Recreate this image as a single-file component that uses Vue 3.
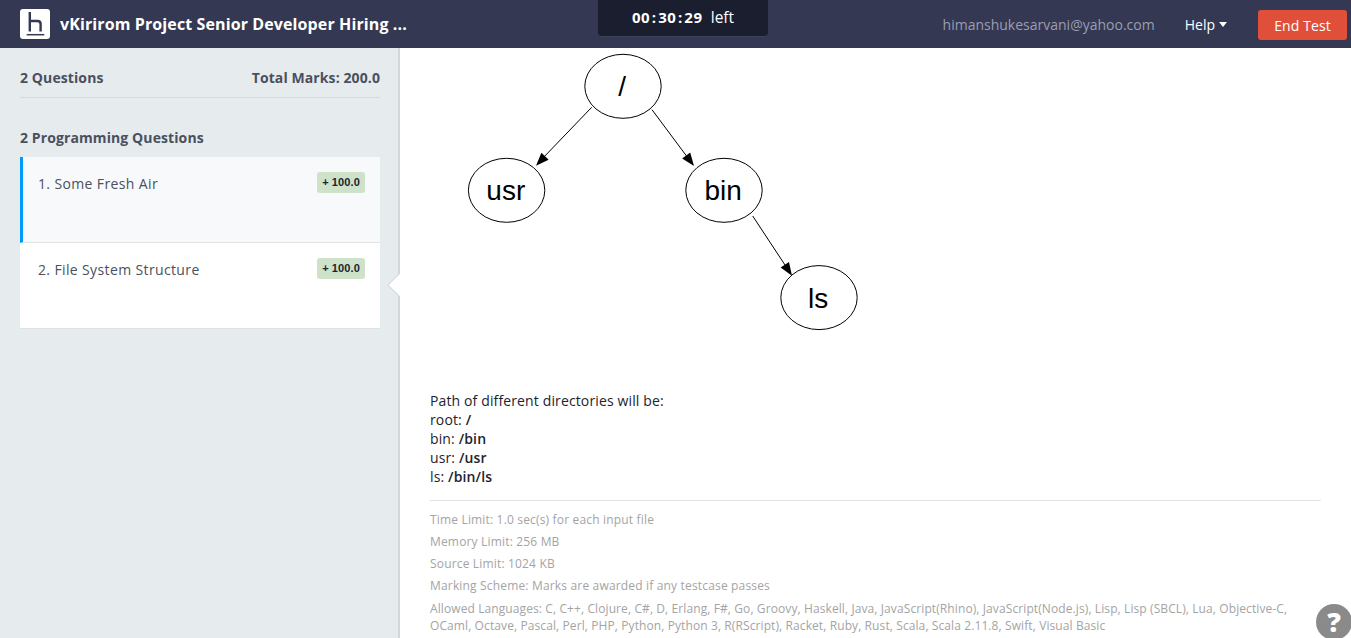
<script setup>
const questions = [
  { id: 1, title: "1. Some Fresh Air", marks: "+ 100.0", active: true },
  { id: 2, title: "2. File System Structure", marks: "+ 100.0", active: false },
];

const nodes = [
  { label: "/", x: 173, y: 38.3 },
  { label: "usr", x: 56.6, y: 142.3 },
  { label: "bin", x: 274, y: 142.3 },
  { label: "ls", x: 369, y: 249.6 },
];

const edges = [
  { x1: 141.7, y1: 59.3, x2: 92, y2: 111, head: "86,117.7 98.6,111.7 91.4,104.8" },
  { x1: 202, y1: 61.7, x2: 238, y2: 110, head: "244,118 240.2,104.6 232.2,110.6" },
  { x1: 302.7, y1: 168, x2: 337, y2: 220, head: "342,227.7 339,214 330.6,219.5" },
];

const paths = [
  { name: "bin", value: "/bin" },
  { name: "usr", value: "/usr" },
  { name: "ls", value: "/bin/ls" },
];

const limits = [
  "Time Limit: 1.0 sec(s) for each input file",
  "Memory Limit: 256 MB",
  "Source Limit: 1024 KB",
  "Marking Scheme: Marks are awarded if any testcase passes",
];
</script>

<template>
  <div class="page">
    <header class="topbar">
      <div class="brand">
        <div class="logo">
          <svg width="30" height="30" viewBox="0 0 30 30">
            <path d="M9.8 3V22.5M9.8 12H17.5Q20.6 12 20.6 15V22.5" fill="none" stroke="#343852" stroke-width="2.4" />
            <path d="M6.7 25.7H24.3" stroke="#343852" stroke-width="1.5" />
          </svg>
        </div>
        <span class="test-name">vKirirom Project Senior Developer Hiring ...</span>
      </div>
      <div class="timer"><b>00 : 30 : 29</b><span>left</span></div>
      <div class="top-right">
        <span class="email">himanshukesarvani@yahoo.com</span>
        <span class="help">Help<i class="caret"></i></span>
        <button class="end-btn">End Test</button>
      </div>
    </header>

    <div class="main">
      <aside class="sidebar">
        <div class="summary">
          <span>2 Questions</span>
          <span>Total Marks: 200.0</span>
        </div>
        <h4 class="section-title">2 Programming Questions</h4>
        <div
          v-for="q in questions"
          :key="q.id"
          class="question"
          :class="{ active: q.active }"
        >
          <span class="q-title">{{ q.title }}</span>
          <span class="badge">{{ q.marks }}</span>
        </div>
        <div class="notch"></div>
      </aside>

      <section class="content">
        <svg class="tree" width="500" height="340" viewBox="0 0 500 340">
          <g v-for="(e, i) in edges" :key="i">
            <line :x1="e.x1" :y1="e.y1" :x2="e.x2" :y2="e.y2" stroke="#000" stroke-width="1" />
            <polygon :points="e.head" fill="#000" />
          </g>
          <g v-for="n in nodes" :key="n.label">
            <ellipse :cx="n.x" :cy="n.y" rx="38.2" ry="32" fill="#fff" stroke="#000" stroke-width="1" />
            <text :x="n.x - 0.8" :y="n.y + 10" text-anchor="middle" class="node-label">{{ n.label }}</text>
          </g>
        </svg>

        <div class="explain">
          <div>Path of different directories will be:</div>
          <div>root: <b>/</b></div>
          <div v-for="p in paths" :key="p.name">{{ p.name }}: <b>{{ p.value }}</b></div>
        </div>

        <div class="meta">
          <div v-for="l in limits" :key="l" class="meta-row">{{ l }}</div>
          <div class="langs">Allowed Languages: C, C++, Clojure, C#, D, Erlang, F#, Go, Groovy, Haskell, Java, JavaScript(Rhino), JavaScript(Node.js), Lisp, Lisp (SBCL), Lua, Objective-C, OCaml, Octave, Pascal, Perl, PHP, Python, Python 3, R(RScript), Racket, Ruby, Rust, Scala, Scala 2.11.8, Swift, Visual Basic</div>
        </div>
      </section>
    </div>

    <div class="help-fab"><span>?</span></div>
  </div>
</template>

<style>
html,
body {
  margin: 0;
  overflow: hidden;
}
</style>

<style scoped>
.page {
  height: 638px;
  display: flex;
  flex-direction: column;
  font-family: "Open Sans", "Liberation Sans", sans-serif;
  overflow: hidden;
  position: relative;
}

.topbar {
  height: 48px;
  flex: none;
  background: #343852;
  display: flex;
  align-items: flex-start;
  justify-content: space-between;
  padding: 0 4px 0 20px;
  position: relative;
}

.brand {
  display: flex;
  align-items: center;
  gap: 10px;
  height: 48px;
}

.logo {
  width: 30px;
  height: 30px;
  background: #fff;
  border-radius: 3px;
}

.logo svg {
  display: block;
}

.test-name {
  color: #fff;
  font-size: 16px;
  font-weight: 700;
  letter-spacing: 0.11px;
}

.timer {
  position: absolute;
  left: 598px;
  top: 0;
  width: 170px;
  height: 37px;
  box-sizing: border-box;
  padding-bottom: 2px;
  background: #1a1e2e;
  border-bottom: 1px solid #3e425a;
  border-radius: 0 0 4px 4px;
  display: flex;
  align-items: center;
  justify-content: center;
  gap: 8px;
  color: #fff;
  font-size: 15.5px;
}

.timer b {
  font-size: 15px;
  letter-spacing: 0.6px;
  word-spacing: -3px;
}

.top-right {
  display: flex;
  align-items: center;
  height: 48px;
}

.email {
  color: #9a9eb0;
  font-size: 14px;
  margin-right: 30px;
}

.help {
  color: #fff;
  font-size: 14px;
  margin-right: 31px;
  display: flex;
  align-items: center;
  gap: 4px;
}

.caret {
  width: 0;
  height: 0;
  border-left: 4.5px solid transparent;
  border-right: 4.5px solid transparent;
  border-top: 5px solid #fff;
}

.end-btn {
  width: 89px;
  height: 30px;
  margin-top: 2px;
  background: #e04f3a;
  color: #fff;
  border: 0;
  border-radius: 3px;
  font-family: inherit;
  font-size: 14px;
  letter-spacing: 0.1px;
  padding: 0;
}

.main {
  flex: 1;
  display: flex;
  min-height: 0;
}

.sidebar {
  width: 400px;
  flex: none;
  box-sizing: border-box;
  background: #e6ebee;
  border-right: 2px solid #d2d7dc;
  padding: 0 18px 0 20px;
  position: relative;
}

.summary {
  height: 50px;
  padding-top: 9px;
  box-sizing: border-box;
  display: flex;
  align-items: center;
  justify-content: space-between;
  border-bottom: 1px solid #d5dadd;
  color: #4a505e;
  font-size: 14px;
  font-weight: 700;
  letter-spacing: 0.1px;
}

.section-title {
  margin: 30px 0 10px;
  height: 19px;
  line-height: 19px;
  color: #4a505e;
  font-size: 14px;
  font-weight: 700;
  letter-spacing: 0.1px;
}

.question {
  height: 86px;
  box-sizing: border-box;
  background: #fff;
  border-bottom: 1px solid #dfe3e6;
  padding: 15px 15px 0 18px;
  display: flex;
  justify-content: space-between;
  align-items: flex-start;
}

.question.active {
  background: #f7f9fb;
  border-left: 3px solid #0099ff;
  padding-left: 15px;
}

.q-title {
  color: #4a505e;
  font-size: 14px;
  letter-spacing: 0.37px;
  line-height: 24px;
}

.badge {
  width: 48px;
  height: 21px;
  background: #cde2c8;
  border-radius: 3px;
  color: #1b2430;
  font-family: "Liberation Sans", Arial, sans-serif;
  font-size: 11px;
  font-weight: 700;
  letter-spacing: 0.1px;
  line-height: 21px;
  text-align: center;
}

.notch {
  position: absolute;
  right: -2px;
  top: 229px;
  width: 16px;
  height: 16px;
  background: #fff;
  transform: translateX(8px) rotate(45deg);
  transform-origin: center;
  box-shadow: -1px 1px 0 #d2d7dc;
}

.content {
  flex: 1;
  min-width: 0;
  padding: 0 30px;
  background: #fff;
  position: relative;
  z-index: 0;
}

.tree {
  display: block;
  margin-left: 20px;
}

.node-label {
  font-family: "Liberation Sans", Arial, sans-serif;
  font-size: 28px;
  fill: #000;
}

.explain {
  margin-top: 3px;
  color: #1d2330;
  font-size: 14px;
  letter-spacing: 0.13px;
  line-height: 19px;
  padding-bottom: 14px;
  border-bottom: 1px solid #e3e3e3;
}

.explain b {
  font-weight: 600;
}

.meta {
  padding-top: 8px;
  color: #a4a4a4;
  font-size: 12px;
  letter-spacing: 0.17px;
}

.meta-row {
  height: 22px;
  line-height: 22px;
}

.langs {
  line-height: 17px;
  margin-top: 3px;
  letter-spacing: 0.1px;
}

.help-fab {
  position: absolute;
  left: 1316px;
  top: 604px;
  width: 36px;
  height: 36px;
  border-radius: 50%;
  background: #8a8a8a;
  display: flex;
  align-items: center;
  justify-content: center;
}

.help-fab span {
  color: #fff;
  font-size: 27px;
  font-weight: 800;
  line-height: 28px;
}
</style>
